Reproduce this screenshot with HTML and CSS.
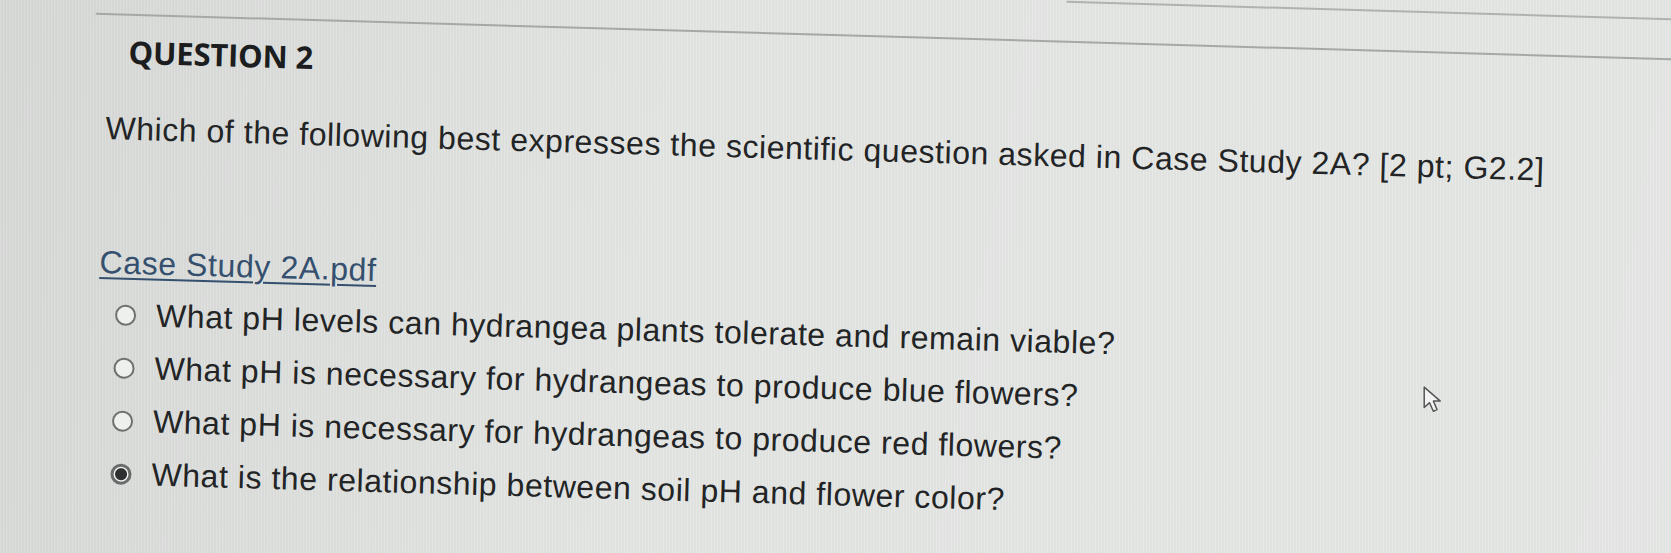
FILE: index.html
```html
<!DOCTYPE html>
<html lang="en">
<head>
<meta charset="utf-8">
<title>Question 2</title>
<link rel="stylesheet" href="styles.css">
</head>
<body>
<div class="screen">
  <div class="page">
    <div class="rule-top"></div>
    <div class="rule"></div>
    <h2 class="qtitle">QUESTION 2</h2>
    <p class="qtext">Which of the following best expresses the scientific question asked in Case Study 2A? [2 pt; G2.2]</p>
    <a class="file-link" href="#">Case Study 2A.pdf</a>
    <ul class="options">
      <li class="option"><span class="radio"></span><span class="label">What pH levels can hydrangea plants tolerate and remain viable?</span></li>
      <li class="option"><span class="radio"></span><span class="label">What pH is necessary for hydrangeas to produce blue flowers?</span></li>
      <li class="option"><span class="radio"></span><span class="label">What pH is necessary for hydrangeas to produce red flowers?</span></li>
      <li class="option"><span class="radio checked"></span><span class="label">What is the relationship between soil pH and flower color?</span></li>
    </ul>
  </div>
  <svg class="cursor" width="28" height="30" viewBox="0 0 26 28" aria-hidden="true">
    <path d="M2 2 L2 21 L7 16.5 L10.5 24.5 L14 23 L10.5 15 L17 15 Z" fill="#f2f3f2" stroke="#555" stroke-width="1.4" stroke-linejoin="round"/>
  </svg>
</div>
</body>
</html>
```

FILE: styles.css
```css
html, body {
  margin: 0;
  padding: 0;
}
body {
  width: 1671px;
  height: 553px;
  overflow: hidden;
  font-family: "Liberation Sans", Arial, sans-serif;
  color: #222425;
}
.screen {
  position: relative;
  width: 1671px;
  height: 553px;
  overflow: hidden;
  background-color: #e3e5e3;
  background-image:
    repeating-linear-gradient(90deg, rgba(255,255,255,0.10) 0px, rgba(255,255,255,0.10) 1px, rgba(0,0,0,0.035) 2px, rgba(0,0,0,0) 3px),
    linear-gradient(100deg, rgba(0,0,0,0.06) 0%, rgba(0,0,0,0) 40%, rgba(255,255,255,0.06) 100%);
}
.page {
  width: 1800px;
  transform-origin: 0 0;
  transform: translate(0, -30px) rotate(1.65deg);
}
.rule-top {
  margin-left: 1067px;
  height: 0;
  border-top: 2px solid #b0b2b0;
}
.rule {
  margin: 38px 0 0 97px;
  height: 0;
  border-top: 2px solid #a6a8a6;
}
.qtitle {
  margin: 18px 0 0 131px;
  font-family: "Open Sans", sans-serif;
  font-weight: 700;
  font-size: 31px;
  line-height: 36px;
  letter-spacing: -0.2px;
  color: #1c1d1e;
}
.qtext {
  margin: 39px 0 0 110px;
  font-size: 32px;
  line-height: 40px;
  letter-spacing: 0.55px;
  white-space: nowrap;
}
.file-link {
  display: block;
  width: fit-content;
  margin: 94px 0 0 108px;
  font-size: 32px;
  line-height: 40px;
  letter-spacing: 0.6px;
  color: #34506e;
  text-decoration: underline;
  text-decoration-thickness: 2px;
  text-underline-offset: 4px;
}
.options {
  list-style: none;
  margin: 12px 0 0 125px;
  padding: 0;
  display: flex;
  flex-direction: column;
  gap: 13px;
}
.option {
  display: flex;
  align-items: center;
  gap: 20px;
  height: 40px;
  font-size: 32px;
  letter-spacing: 0.55px;
  white-space: nowrap;
}
.radio {
  box-sizing: border-box;
  width: 21px;
  height: 21px;
  border-radius: 50%;
  border: 2px solid #6f7170;
  background: #eef0ee;
  flex: none;
}
.radio.checked {
  border: 3px solid #6a6c6b;
  background: radial-gradient(circle, #2e2f30 0, #2e2f30 5.5px, #f3f4f3 6.5px);
}
.cursor {
  position: absolute;
  left: 1422px;
  top: 385px;
}
```
